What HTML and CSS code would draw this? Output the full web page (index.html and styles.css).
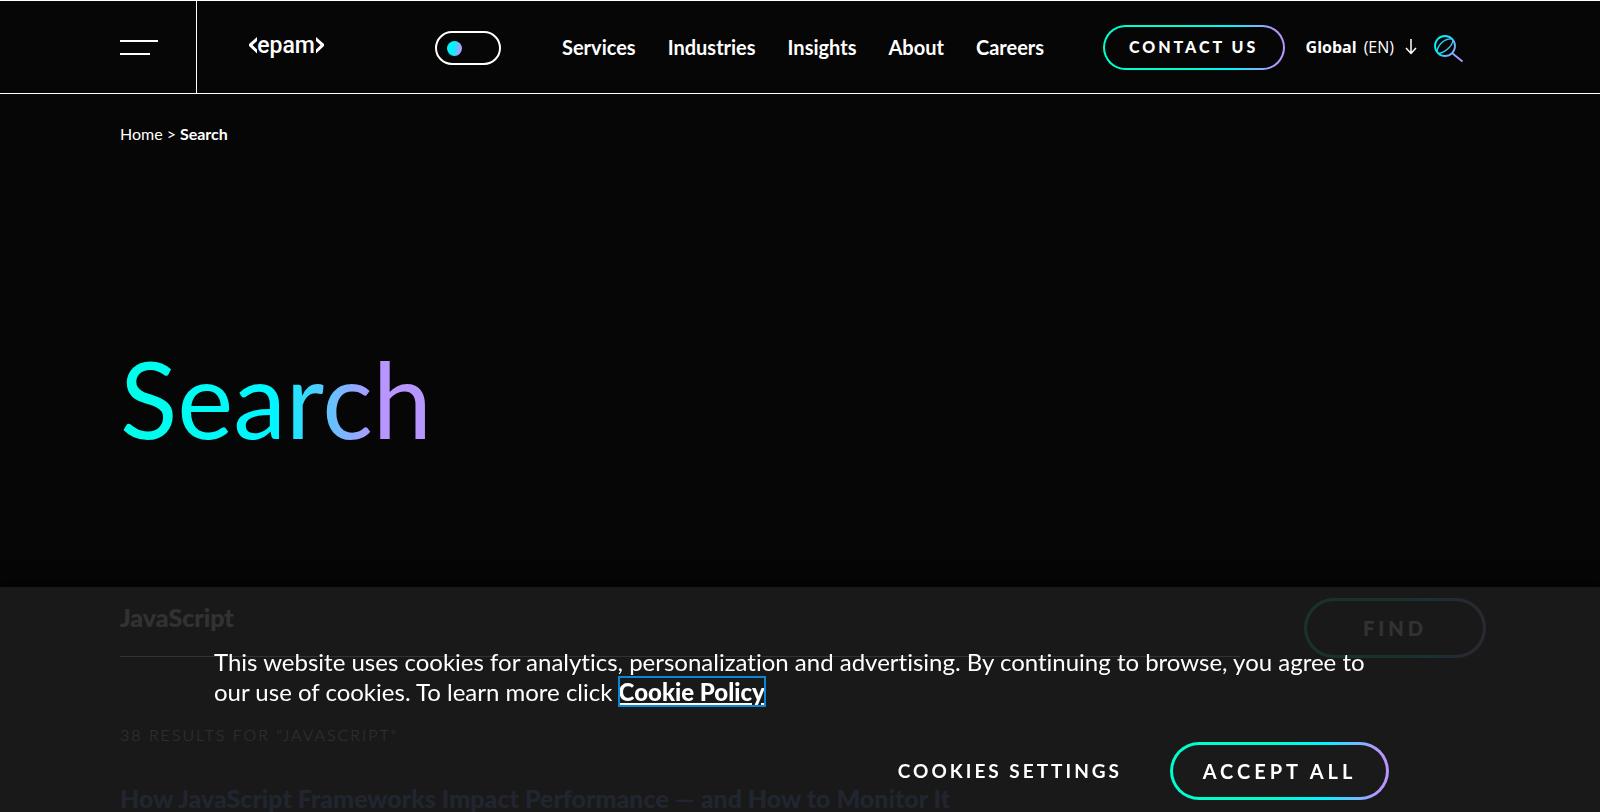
FILE: index.html
```html
<!DOCTYPE html>
<html lang="en">
<head>
<meta charset="utf-8">
<meta name="viewport" content="width=device-width, initial-scale=1">
<title>Search | EPAM</title>
<link rel="stylesheet" href="styles.css">
</head>
<body>
<header class="header">
  <button class="menu" type="button" aria-label="Open menu"><span class="menu-bar"></span><span class="menu-bar menu-bar-short"></span></button>
  <a class="logo" href="#" aria-label="EPAM home">
    <svg width="76" height="34" viewBox="0 0 76 34" aria-hidden="true">
      <path d="M8 5v4L3.500 13 8 17.500v4L0 14v-2zM67 5v4l4.500 4-4.500 4.500v4l8-7.500v-2z" fill="#fff"/>
      <text class="logo-text" x="37" y="21" text-anchor="middle">epam</text>
    </svg>
  </a>
  <label class="theme"><input class="theme-input" type="checkbox" aria-label="Light theme"></label>
  <nav class="nav">
    <a class="nav-link" href="#">Services</a>
    <a class="nav-link" href="#">Industries</a>
    <a class="nav-link" href="#">Insights</a>
    <a class="nav-link" href="#">About</a>
    <a class="nav-link" href="#">Careers</a>
  </nav>
  <div class="actions">
    <a class="pill contact" href="#">CONTACT US</a>
    <button class="locale" type="button"><b>Global</b><span>(EN)</span>
      <svg class="arrow" width="12" height="16" viewBox="0 0 12 16" fill="none" stroke="#fff" stroke-width="1.500" aria-hidden="true"><path d="M6 0v14M1 9l5 5.500L11 9"/></svg>
    </button>
    <button class="search-toggle" type="button" aria-label="Search">
      <svg width="30" height="28" viewBox="0 0 30 28" fill="none" stroke="url(#ig)" stroke-width="1.800" aria-hidden="true">
        <defs><linearGradient id="ig" gradientUnits="userSpaceOnUse" x1="2" y1="4" x2="28" y2="18"><stop offset="0" stop-color="#00f6ff"/><stop offset=".35" stop-color="#20d8ff"/><stop offset="1" stop-color="#b896ff"/></linearGradient></defs>
        <circle cx="11" cy="11" r="10"/>
        <path stroke-width="1.300" d="M3 17C3.500 10 10 3.500 18 4M4 18.500C11 18 18.500 11 19 5"/>
        <path d="M18 18l10.500 8.500"/>
      </svg>
    </button>
  </div>
</header>
<main class="main">
  <nav class="crumbs" aria-label="Breadcrumb"><a class="crumb" href="#">Home</a><span>&gt;</span><b>Search</b></nav>
  <h1 class="title">Search</h1>
  <form class="form">
    <input class="query" type="text" value="JavaScript" aria-label="Search query">
    <button class="pill find" type="button">FIND</button>
  </form>
  <p class="count">38 RESULTS FOR "JAVASCRIPT"</p>
  <h2 class="result"><a class="result-link" href="#">How JavaScript Frameworks Impact Performance — and How to Monitor It</a></h2>
</main>
<section class="cookies" aria-label="Cookie notice">
  <p class="cookies-text">This website uses cookies for analytics, personalization and advertising. By continuing to browse, you agree to our use of cookies. To learn more click <a class="policy" href="#">Cookie Policy</a></p>
  <div class="cookies-actions">
    <button class="settings" type="button">COOKIES SETTINGS</button>
    <button class="pill accept" type="button">ACCEPT ALL</button>
  </div>
</section>
</body>
</html>
```
FILE: styles.css
```css
* { box-sizing: border-box; }
body {
  margin: 0;
  height: 100vh;
  overflow: hidden;
  background: #060606;
  color: #fff;
  font: 400 16px/24px Lato, "Open Sans", sans-serif;
  font-variant-ligatures: none;
}
a { color: inherit; text-decoration: none; }
button { padding: 0; border: 0; background: none; color: inherit; font: inherit; }

.header {
  display: flex;
  align-items: center;
  height: 94px;
  padding-left: 120px;
  border-top: 1px solid #fff;
  border-bottom: 1px solid #fff;
}
.menu {
  display: flex;
  flex-direction: column;
  justify-content: center;
  gap: 11px;
  width: 77px;
  height: 94px;
  border-right: 1px solid #fff;
}
.menu-bar { width: 38px; height: 2px; background: #fff; }
.menu-bar-short { width: 30px; }
.logo { display: flex; margin-left: 52px; padding-top: 3px; }
.logo-text { font: 500 23px Roboto, "Liberation Sans", sans-serif; fill: #fff; }
.theme { display: flex; margin-left: 110px; padding-top: 2px; }
.theme-input {
  appearance: none;
  display: flex;
  align-items: center;
  width: 66px;
  height: 34px;
  margin: 0;
  padding-left: 10px;
  border: 2px solid #fff;
  border-radius: 17px;
}
.theme-input::before {
  content: "";
  width: 15px;
  height: 15px;
  border-radius: 50%;
  background: linear-gradient(100deg, #00f6ff 40%, #b896ff 90%);
}
.nav { display: flex; gap: 32px; margin-left: 61px; font-size: 20px; font-weight: 700; }
.actions { display: flex; align-items: center; margin-left: auto; padding-right: 136px; }

.pill {
  display: flex;
  align-items: center;
  justify-content: center;
  border: 3px solid transparent;
  border-radius: 30px;
  background: linear-gradient(var(--fill), var(--fill)) padding-box,
    linear-gradient(90deg, #00ffcd 0 45%, #00f6ff 70%, #b896ff 95%) border-box;
}
.contact {
  --fill: #060606;
  width: 182px;
  height: 45px;
  border-width: 2px;
  font-weight: 900;
  letter-spacing: 3px;
}
.locale { display: flex; align-items: center; gap: 7px; margin-left: 21px; font: 400 16px/24px "Open Sans", sans-serif; }
.arrow { margin-left: 4px; }
.search-toggle { display: flex; margin-left: 17px; padding-top: 3px; }

.main { padding: 28px 114px 0 120px; }
.crumbs { display: flex; gap: 4px; }
.title {
  width: max-content;
  margin: 186px 0 0;
  background: linear-gradient(90deg, #00ffe8, #00f6ff 50%, #b896ff 82%);
  background-clip: text;
  color: transparent;
  font-size: 106px;
  font-weight: 400;
  line-height: 132px;
}
.form { display: flex; align-items: flex-start; justify-content: space-between; margin-top: 134px; }
.query {
  width: 82%;
  height: 59px;
  padding: 0 0 20px;
  border: 0;
  border-bottom: 1px solid #fff;
  background: none;
  color: #fff;
  font: 900 25px/30px Lato, "Open Sans", sans-serif;
}
.find { --fill: #060606; width: 182px; height: 60px; font-size: 20px; font-weight: 900; letter-spacing: 4px; }
.count { margin: 65px 0 0; letter-spacing: 2px; font-weight: 300; }
.result { margin: 35px 0 0; font-size: 25px; font-weight: 900; line-height: 32px; }
.result-link { color: #5078e0; }

.cookies {
  position: fixed;
  right: 0;
  bottom: 0;
  left: 0;
  padding: 60px 211px 12px 214px;
  background: rgba(28, 28, 28, .9);
  box-shadow: 0 0 18px #000;
}
.cookies-text { margin: 0; font-size: 24px; line-height: 30px; }
.policy { outline: 2px solid #0b87da; outline-offset: -1px; font-weight: 900; text-decoration: underline; }
.cookies-actions { display: flex; align-items: center; justify-content: flex-end; gap: 48px; margin-top: 35px; }
.settings { font-size: 19px; font-weight: 700; letter-spacing: 3px; }
.accept { --fill: #1a1a1a; width: 219px; height: 58px; font-size: 20px; font-weight: 700; letter-spacing: 4px; }
```
